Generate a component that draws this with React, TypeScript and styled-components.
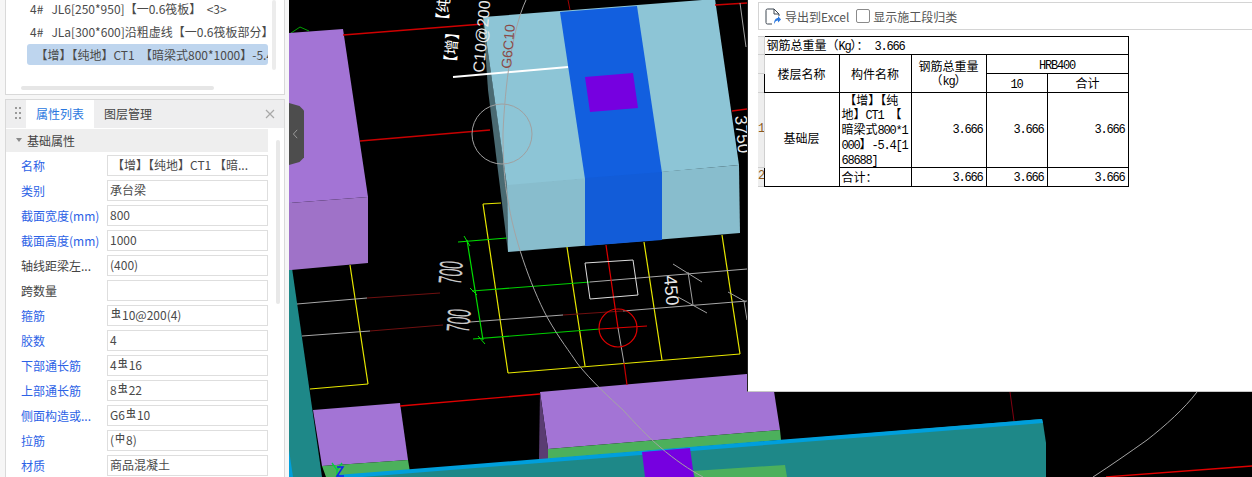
import React from "react";
import styled, { createGlobalStyle } from "styled-components";

const FONT = `"Noto Sans CJK SC", "Noto Sans", sans-serif`;
const MONO = `"Liberation Mono", "Noto Sans CJK SC", monospace`;

const Global = createGlobalStyle`
  html, body { margin: 0; padding: 0; background: #f5f5f5; }
  body { font-family: ${FONT}; font-size: 12px; }
`;

const Page = styled.div`
  width: 1252px;
  height: 477px;
  display: flex;
  overflow: hidden;
`;

const Sidebar = styled.aside`
  width: 289px;
  flex: none;
  height: 477px;
  padding: 0 4px 0 5px;
  box-sizing: border-box;
  display: flex;
  flex-direction: column;
  gap: 4px;
  background: #f6f6f6;
`;

const ListPanel = styled.section`
  height: 95px;
  flex: none;
  box-sizing: border-box;
  background: #fff;
  border: 1px solid #d9d9d9;
  border-top: none;
  position: relative;
  padding: 0 0 0 21px;
`;

const ListRow = styled.div<{ $selected?: boolean }>`
  width: 241px;
  height: 21px;
  margin-bottom: 2px;
  line-height: 21px;
  padding-left: 3px;
  box-sizing: border-box;
  white-space: pre;
  overflow: hidden;
  color: #4a4a4a;
  border-radius: 3px;
  background: ${(p) => (p.$selected ? "#bed5ee" : "transparent")};
  &:first-child { margin-top: -2px; }
`;

const ScrollV = styled.div`
  position: absolute;
  left: 266px;
  top: 0;
  width: 4px;
  height: 70px;
  border-radius: 2px;
  background: #ececec;
`;

const ScrollH = styled.div`
  position: absolute;
  left: 15px;
  top: 86px;
  width: 193px;
  height: 4px;
  border-radius: 2px;
  background: #e6e6e6;
`;

const PropPanel = styled.section`
  flex: 1;
  min-height: 0;
  box-sizing: border-box;
  background: #fff;
  border: 1px solid #d9d9d9;
  border-bottom: none;
  position: relative;
`;

const TabStrip = styled.div`
  height: 28px;
  background: #eeeeef;
  display: flex;
  align-items: stretch;
  padding-left: 20px;
  position: relative;
`;

const Grip = styled.div`
  position: absolute;
  left: 9px;
  top: 7px;
  width: 6px;
  height: 14px;
  background-image: radial-gradient(circle at 1px 1px, #9a9a9a 1px, transparent 1.2px);
  background-size: 4px 5px;
`;

const Tab = styled.div<{ $active?: boolean }>`
  width: ${(p) => (p.$active ? 68 : 78)}px;
  padding-left: 10px;
  box-sizing: border-box;
  line-height: 28px;
  color: ${(p) => (p.$active ? "#2a78e0" : "#444")};
  background: ${(p) => (p.$active ? "#fff" : "transparent")};
`;

const CloseBtn = styled.div`
  position: absolute;
  right: 8px;
  top: 8px;
  width: 12px;
  height: 12px;
  color: #a8a8a8;
  display: flex;
`;

const GroupHead = styled.div`
  margin-top: 1px;
  width: 262px;
  height: 23px;
  background: #eeeeee;
  display: flex;
  align-items: center;
  color: #444;
  padding-left: 10px;
  box-sizing: border-box;
  gap: 5px;
`;

const Caret = styled.i`
  display: block;
  width: 0;
  height: 0;
  margin-top: -2px;
  border-left: 3.5px solid transparent;
  border-right: 3.5px solid transparent;
  border-top: 4px solid #8a8a8a;
`;

const PropList = styled.div`
  padding: 3px 0 0 15px;
  width: 262px;
  box-sizing: border-box;
  display: flex;
  flex-direction: column;
  gap: 4px;
`;

const PropRow = styled.div`
  display: flex;
  height: 21px;
  align-items: center;
`;

const PropLabel = styled.div<{ $blue?: boolean }>`
  width: 86px;
  flex: none;
  color: ${(p) => (p.$blue ? "#2c62e6" : "#444")};
  white-space: nowrap;
`;

const PropValue = styled.div<{ $pad?: number }>`
  width: 161px;
  height: 21px;
  box-sizing: border-box;
  border: 1px solid #dedede;
  line-height: 18px;
  padding-left: ${(p) => p.$pad ?? 2}px;
  color: #4a4a4a;
  white-space: nowrap;
  overflow: hidden;
`;

const Rebar = styled.span`
  font-size: 10px;
  font-weight: 500;
  position: relative;
  top: -3px;
  margin: 0 1px;
`;

const PropScroll = styled.div`
  position: absolute;
  left: 270px;
  top: 40px;
  width: 4px;
  height: 164px;
  border-radius: 2px;
  background: #e8e8e8;
`;

const Canvas = styled.main`
  flex: 1;
  position: relative;
  background: #000;
  overflow: hidden;
`;

const Scene = styled.svg`
  display: block;
  width: 963px;
  height: 477px;
`;

const Handle = styled.div`
  position: absolute;
  left: 0;
  top: 103px;
  width: 15px;
  height: 62px;
  background: #4d4d4d;
  clip-path: polygon(0 0, 70% 5%, 100% 12%, 100% 88%, 70% 95%, 0 100%);
  color: #9a9a9a;
  display: flex;
  align-items: center;
  padding-left: 3px;
  box-sizing: border-box;
`;

const Report = styled.section`
  position: absolute;
  left: 458px;
  top: 0;
  width: 505px;
  height: 392px;
  box-sizing: border-box;
  background: #fff;
  border-left: 1px solid #222;
  border-bottom: 1px solid #c8c8c8;
  padding: 2px 0 0 10px;
`;

const Toolbar = styled.div`
  height: 28px;
  box-sizing: border-box;
  border: 1px solid #d4d4d4;
  border-right: none;
  display: flex;
  align-items: center;
  padding-left: 6px;
  color: #555;
`;

const ToolIcon = styled.svg`
  width: 16px;
  height: 17px;
  flex: none;
  margin-right: 4px;
`;

const ToolLabel = styled.span`
  margin-right: 7px;
  white-space: nowrap;
`;

const CheckBox = styled.span`
  width: 12px;
  height: 12px;
  border: 1px solid #8a8a8a;
  border-radius: 2px;
  margin-right: 3px;
  margin-top: -1px;
  background: #fff;
  flex: none;
`;

const Sheet = styled.table`
  margin-top: 6px;
  border-collapse: collapse;
  table-layout: fixed;
  width: 370px;
  color: #000;
  font-family: ${FONT};
  font-size: 12px;
  line-height: 14px;
`;

const RowNo = styled.td`
  padding: 0 0 3px;
  background: #eeeeee;
  border: 1px solid #cfcfcf;
  border-left: none;
  color: #8a5a20;
  font-size: 12px;
  font-family: ${MONO};
  text-align: center;
  overflow: hidden;
`;

const Cell = styled.td<{ $align?: string; $h?: number; $lift?: number }>`
  border: 1px solid #000;
  padding: 0 ${(p) => (p.$align === "right" ? "3px" : "2px")} ${(p) => p.$lift ?? 0}px 2px;
  height: ${(p) => p.$h ?? 18}px;
  box-sizing: border-box;
  text-align: ${(p) => p.$align ?? "center"};
  vertical-align: middle;
  white-space: nowrap;
  overflow: hidden;
`;

const Num = styled.span`
  font-family: ${MONO};
  font-size: 12px;
  letter-spacing: -1.2px;
  line-height: 12px;
`;

const polys: [string, string][] = [
  // left teal strip and left purple column
  ["289,268 292,268 322,477 289,477", "#1e8888"],
  ["289,450 293,477 289,477", "#009fdc"],
  ["289,202 292,202 292,270 289,270", "#4cb05c"],
  ["289,33 343,29 368,197 289,203", "#a374d5"],
  ["289,203 368,197 368,263 291,270 289,270", "#9f72c8"],
  // column block
  ["483,17 488,90 508,252 507,185", "#4a6a72"],
  ["483,17 715,-1 739,165 507,186", "#8dc5d6"],
  ["507,185 739,165 740,233 508,252", "#88bdcd"],
  ["560,12 637,6 662,173 585,179", "#125fdf"],
  ["585,178 662,172 662,240 585,246", "#125cd8"],
  ["585,77 633,73 638,108 590,112", "#7600e0"],
  // lower blocks
  ["313,410 400,403 408,460 322,466", "#a374d5"],
  ["322,466 408,460 410,472 340,477 326,477", "#4cb05c"],
  ["540,392 771,372 780,430 548,449", "#a374d5"],
  ["540,392 548,449 549,459 539,459", "#5a3c72"],
  ["548,449 780,430 781,440 548,459", "#4cb05c"],
  ["337,477 1042,419 1043,423 1046,443 1046,477", "#1e8888"],
  ["337,475 1042,419 1043,423 337,479", "#009fdc"],
  ["693,471 785,465 787,477 695,477", "#4cb05c"],
  ["642,452 690,448 694,477 645,477", "#7600e0"],
];

const lines: [number, number, number, number, string, number?][] = [
  // red axes
  [343, 35, 483, 24, "#d00000", 1.4],
  [360, 141, 490, 130, "#c80000", 1.4],
  [715, 5, 747, 3, "#c80000", 1.4],
  [732, 111, 747, 109, "#c80000", 1.4],
  [568, 0, 570, 10, "#a00000"],
  [400, 406, 540, 394, "#e00000", 1.3],
  [1010, 392, 1014, 421, "#800010"],
  [1106, 477, 1252, 466, "#e00000", 1.3],
  // white leader
  [453, 77, 568, 67, "#ffffff", 2],
  // yellow outlines
  [483, 204, 501, 203, "#e8e800", 1.2],
  [483, 204, 508, 373, "#e8e800", 1.2],
  [508, 373, 740, 354, "#e8e800", 1.2],
  [722, 235, 740, 354, "#e8e800", 1.2],
  [567, 247, 585, 366, "#e8e800", 1.2],
  [644, 242, 662, 360, "#e8e800", 1.2],
  [350, 265, 368, 384, "#e8e800", 1.2],
  [368, 384, 310, 389, "#e8e800", 1.2],
  // grey / dark red grid lines
  [297, 304, 367, 298, "#a8a8a8"],
  [367, 298, 440, 293, "#701010"],
  [302, 336, 370, 331, "#a8a8a8"],
  [370, 331, 443, 325, "#701010"],
  [470, 322, 563, 315, "#a8a8a8"],
  [563, 315, 623, 311, "#701010"],
  [623, 311, 747, 301, "#a8a8a8"],
  [590, 282, 747, 269, "#a8a8a8"],
  // green dimension
  [467, 240, 483, 340, "#00e000", 1.2],
  [458, 242, 507, 238, "#00e000", 1.2],
  [472, 291, 590, 282, "#00d000", 1.2],
  [473, 339, 600, 329, "#00d000", 1.2],
  [464, 236, 470, 246, "#00e000"],
  [470, 288, 477, 295, "#00e000"],
  [478, 336, 485, 344, "#00e000"],
  // red node
  [600, 329, 647, 326, "#e00000", 1.2],
  [606, 245, 618, 328, "#e00000", 1.2],
  [618, 328, 624, 363, "#a8a8a8"],
  [624, 363, 627, 385, "#c80000", 1.2],
  // 450 dimension
  [673, 264, 702, 282, "#a0a0a0"],
  [678, 297, 707, 313, "#a0a0a0"],
  [688, 272, 693, 305, "#a0a0a0"],
  [728, 292, 746, 302, "#a0a0a0"],
  [744, 301, 747, 320, "#a0a0a0"],
  [740, 3, 746, 47, "#a0a0a0"],
];

const rows: { label: string; blue?: boolean; value: React.ReactNode; pad?: number }[] = [
  { label: "名称", blue: true, value: "【增】【纯地】CT1 【暗...", pad: 4 },
  { label: "类别", blue: true, value: "承台梁" },
  { label: "截面宽度(mm)", blue: true, value: "800" },
  { label: "截面高度(mm)", blue: true, value: "1000" },
  { label: "轴线距梁左...", value: "(400)" },
  { label: "跨数量", value: "" },
  { label: "箍筋", blue: true, value: <><Rebar>虫</Rebar>10@200(4)</> },
  { label: "胶数", blue: true, value: "4" },
  { label: "下部通长筋", blue: true, value: <>4<Rebar>虫</Rebar>16</> },
  { label: "上部通长筋", blue: true, value: <>8<Rebar>虫</Rebar>22</> },
  { label: "侧面构造或...", blue: true, value: <>G6<Rebar>虫</Rebar>10</> },
  { label: "拉筋", blue: true, value: <>(<Rebar>中</Rebar>8)</> },
  { label: "材质", blue: true, value: "商品混凝土" },
];

const Angled = ({ x, y, a, size, fill, sx = 1, children }: { x: number; y: number; a: number; size: number; fill: string; sx?: number; children: string }) => (
  <text
    transform={`translate(${x} ${y}) rotate(${a}) scale(${sx} 1)`}
    fontSize={size}
    fill={fill}
    fontFamily={`"Liberation Sans", "Noto Sans CJK SC", sans-serif`}
  >
    {children}
  </text>
);

export default function App() {
  return (
    <Page>
      <Global />
      <Sidebar>
        <ListPanel>
          <ListRow>{"4#   JL6[250*950]【一0.6筏板】  <3>"}</ListRow>
          <ListRow>{"4#   JLa[300*600]沿粗虚线【一0.6筏板部分】"}</ListRow>
          <ListRow $selected>{"  【增】【纯地】CT1  【暗梁式800*1000】-5.4[168688]"}</ListRow>
          <ScrollV />
          <ScrollH />
        </ListPanel>
        <PropPanel>
          <TabStrip>
            <Grip />
            <Tab $active>属性列表</Tab>
            <Tab>图层管理</Tab>
            <CloseBtn>
              <svg viewBox="0 0 12 12" width="12" height="12" fill="none" stroke="currentColor" strokeWidth="1.2">
                <path d="M2 2l8 8M10 2l-8 8" />
              </svg>
            </CloseBtn>
          </TabStrip>
          <GroupHead>
            <Caret />
            基础属性
          </GroupHead>
          <PropList>
            {rows.map((r) => (
              <PropRow key={r.label}>
                <PropLabel $blue={r.blue}>{r.label}</PropLabel>
                <PropValue $pad={r.pad}>{r.value}</PropValue>
              </PropRow>
            ))}
          </PropList>
          <PropScroll />
        </PropPanel>
      </Sidebar>

      <Canvas>
        <Scene viewBox="289 0 963 477">
          <polyline points="291,33 300,27 309,31" fill="none" stroke="#00a000" />
          {polys.map(([points, fill]) => (
            <polygon key={points} points={points} fill={fill} />
          ))}
          {lines.map(([x1, y1, x2, y2, c, w]) => (
            <line key={`${x1}-${y1}-${x2}`} x1={x1} y1={y1} x2={x2} y2={y2} stroke={c} strokeWidth={w ?? 1} />
          ))}
          <polygon points="585,263 633,260 638,295 590,299" fill="none" stroke="#dddddd" />
          <circle cx="618" cy="328" r="19" fill="none" stroke="#e00000" strokeWidth="1.2" />
          <circle cx="502" cy="134" r="30" fill="none" stroke="#a0a0a0" />
          <path
            d="M526 0 C512 30 505 85 503 133 C503 165 505 185 508 200 C513 235 530 285 547 317 C560 340 570 352 577 363 C592 382 610 398 623 410 C635 423 648 437 660 447 C675 460 690 470 703 477"
            fill="none"
            stroke="#a4a4a4"
          />
          <path d="M1197 392 C1185 408 1165 426 1147 440 C1130 452 1110 466 1093 477" fill="none" stroke="#a4a4a4" />
          <Angled x={455} y={70} a={-85} size={15} fill="#ffffff">【增】</Angled>
          <Angled x={447} y={28} a={-85} size={15} fill="#ffffff">【纯</Angled>
          <Angled x={484} y={73} a={-85} size={16} fill="#e8e8e8">C10@200(4)</Angled>
          <Angled x={511} y={69} a={-85} size={14} fill="#8b4a46">G6C10</Angled>
          <Angled x={735} y={116} a={85} size={17} fill="#e8e8e8">3750</Angled>
          <Angled x={664} y={276} a={85} size={18} fill="#e8e8e8">450</Angled>
          <Angled x={461} y={285} a={-85} size={33} sx={0.42} fill="#c8c8c8">700</Angled>
          <Angled x={469} y={333} a={-85} size={33} sx={0.42} fill="#c8c8c8">700</Angled>
          <path d="M332 463l5 7v7M342 463l-5 7" fill="none" stroke="#00d040" strokeWidth="1.3" />
          <path d="M337 467h6l-6 9h7" fill="none" stroke="#1020f0" strokeWidth="1.5" />
        </Scene>
        <Handle>
          <svg viewBox="0 0 8 12" width="7" height="10" fill="none" stroke="currentColor" strokeWidth="1.2">
            <path d="M6 1L1.5 6 6 11" />
          </svg>
        </Handle>
        <Report>
          <Toolbar>
            <ToolIcon viewBox="0 0 16 17">
              <path d="M9 1H2.5A1.5 1.5 0 0 0 1 2.5v12A1.5 1.5 0 0 0 2.5 16H7M9 1l5 5v2M9 1v5h5" fill="none" stroke="#3d4650" strokeWidth="1" />
              <path d="M9 16c0-4 2-6 4-6V8l3 3.5-3 3V12.5c-1.5 0-3 1-4 3.5z" fill="#2a78e0" />
            </ToolIcon>
            <ToolLabel>导出到Excel</ToolLabel>
            <CheckBox />
            <ToolLabel>显示施工段归类</ToolLabel>
          </Toolbar>
          <Sheet>
            <colgroup>
              <col width="6" />
              <col width="75" />
              <col width="72" />
              <col width="75" />
              <col width="61" />
              <col width="81" />
            </colgroup>
            <tbody>
              <tr>
                <RowNo />
                <Cell colSpan={5} $align="left" $h={18}>
                  钢筋总重量（<Num>Kg</Num>）：<Num> 3.666</Num>
                </Cell>
              </tr>
              <tr>
                <RowNo />
                <Cell rowSpan={2}>楼层名称</Cell>
                <Cell rowSpan={2}>构件名称</Cell>
                <Cell rowSpan={2}>
                  钢筋总重量
                  <br />（<Num>kg</Num>）
                </Cell>
                <Cell colSpan={2} $h={19}><Num>HRB400</Num></Cell>
              </tr>
              <tr>
                <RowNo />
                <Cell $h={19}><Num>10</Num></Cell>
                <Cell $h={19}>合计</Cell>
              </tr>
              <tr>
                <RowNo>1</RowNo>
                <Cell rowSpan={2} $lift={3}>基础层</Cell>
                <Cell $align="left" $h={75}>
                  &nbsp;【增】【纯
                  <br />地】<Num>CT1 </Num>【
                  <br />暗梁式<Num>800*1</Num>
                  <br /><Num>000</Num>】<Num>-5.4[1</Num>
                  <br /><Num>68688]</Num>
                </Cell>
                <Cell $align="right" $lift={3}><Num>3.666</Num></Cell>
                <Cell $align="right" $lift={3}><Num>3.666</Num></Cell>
                <Cell $align="right" $lift={3}><Num>3.666</Num></Cell>
              </tr>
              <tr>
                <RowNo>2</RowNo>
                <Cell $align="left" $h={19} $lift={1}>合计：</Cell>
                <Cell $align="right" $lift={1}><Num>3.666</Num></Cell>
                <Cell $align="right" $lift={1}><Num>3.666</Num></Cell>
                <Cell $align="right" $lift={1}><Num>3.666</Num></Cell>
              </tr>
            </tbody>
          </Sheet>
        </Report>
      </Canvas>
    </Page>
  );
}
